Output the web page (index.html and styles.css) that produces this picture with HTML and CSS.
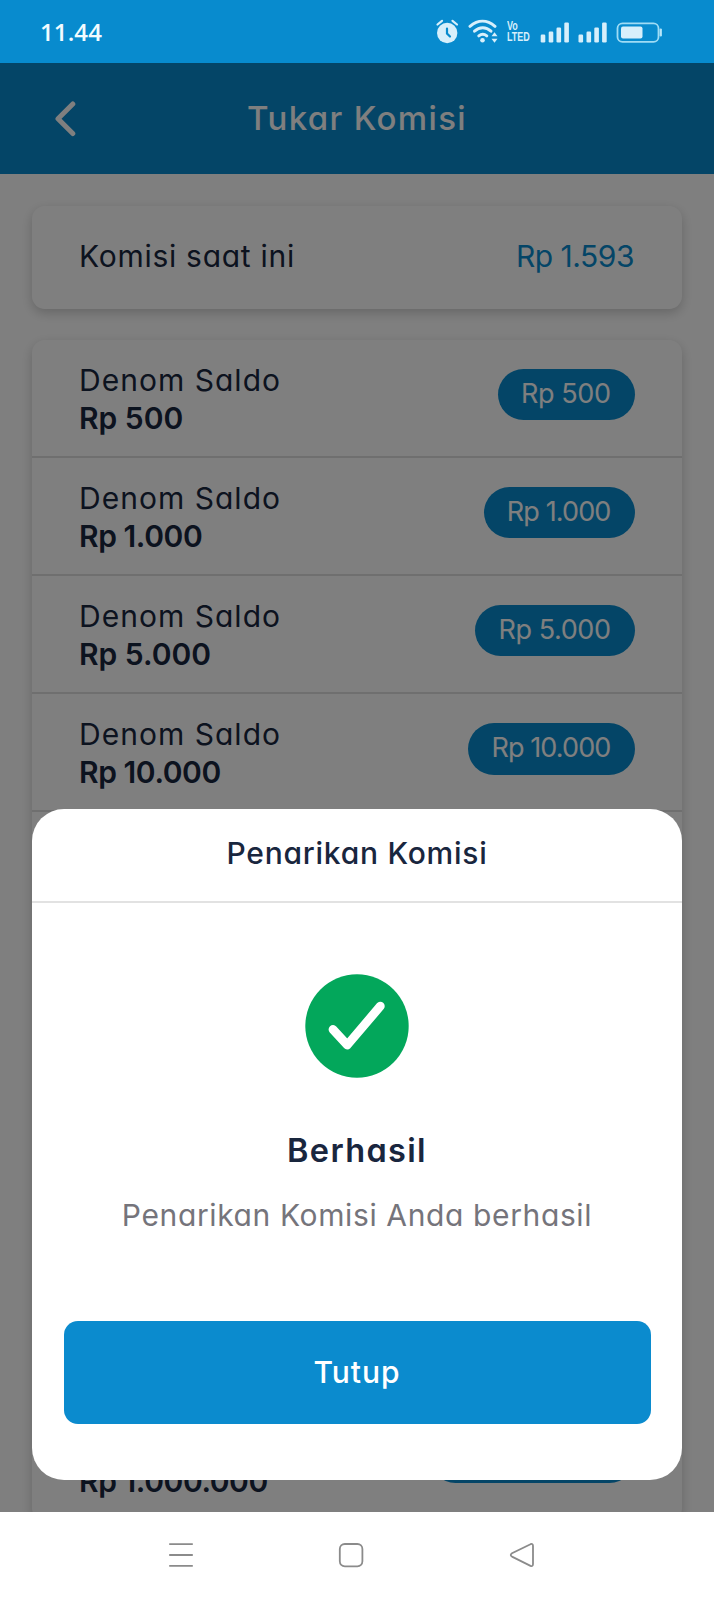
FILE: index.html
```
<!DOCTYPE html>
<html lang="id">
<head>
<meta charset="utf-8">
<meta name="viewport" content="width=device-width, initial-scale=1">
<title>Tukar Komisi</title>
<link rel="stylesheet" href="styles.css">
</head>
<body>
<div class="phone">
  <div class="status">
    <span class="clock">11.44</span>
    <svg class="status-icons" viewBox="0 0 230 26" width="230" height="26" fill="#d7effb" stroke="none">
      <!-- alarm -->
      <circle cx="12.200" cy="15" r="10.200"/>
      <path d="M2.500 6.500 7 2.800M22 6.500 17.500 2.800" stroke="#d7effb" stroke-width="2.200" stroke-linecap="round"/>
      <path d="M12 10.500v5l3 3" fill="none" stroke="#088bce" stroke-width="2.200" stroke-linecap="round"/>
      <!-- wifi -->
      <g fill="none" stroke="#d7effb" stroke-width="3" stroke-linecap="round">
        <path d="M35 8.300C43 1.500 52 1.500 60 8.300"/>
        <path d="M39.500 13.200C44.500 8.600 51 8.600 56 13.200"/>
        <path d="M43.800 17.800C46.300 15.800 49.300 15.800 51.800 17.800"/>
      </g>
      <circle cx="47.500" cy="22.300" r="2.300"/>
      <path d="M56.500 18.300 59.500 14.300 62.500 18.300ZM56.500 20.800 59.500 24.800 62.500 20.800Z"/>
      <!-- signal bars -->
      <g id="bars">
        <rect x="105.700" y="16.500" width="4.600" height="8" rx="1.200"/>
        <rect x="113.700" y="13.500" width="4.600" height="11" rx="1.200"/>
        <rect x="121.500" y="9.500" width="4.600" height="15" rx="1.200"/>
        <rect x="129.300" y="4.500" width="4.600" height="20" rx="1.200"/>
      </g>
      <use href="#bars" x="37.800"/>
      <!-- battery -->
      <rect x="182.500" y="5.300" width="41" height="18.600" rx="5" fill="none" stroke="#9fdcf5" stroke-width="1.800"/>
      <rect x="186" y="8.600" width="21.500" height="12" rx="2"/>
      <path d="M225 11h1.500v7h-1.500z" stroke="#9fdcf5" stroke-width="1"/>
    </svg>
    <span class="volte"><span>Vo</span><span>LTED</span></span>
  </div>

  <div class="app">
    <header class="topbar">
      <svg class="back" viewBox="0 0 22 36" width="22" height="36"><path d="M17.800 3 3 17.700 17.800 32.500" fill="none" stroke="#fff" stroke-width="5" stroke-linecap="round" stroke-linejoin="round"/></svg>
      <h1>Tukar Komisi</h1>
    </header>
    <main class="content">
      <section class="card balance">
        <span class="label">Komisi saat ini</span>
        <span class="amount">Rp 1.593</span>
      </section>
      <section class="card list">
        <div class="row"><div class="denom"><span class="name">Denom Saldo</span><b>Rp 500</b></div><span class="pill">Rp 500</span></div>
        <div class="row"><div class="denom"><span class="name">Denom Saldo</span><b class="one">Rp 1.000</b></div><span class="pill one">Rp 1.000</span></div>
        <div class="row"><div class="denom"><span class="name">Denom Saldo</span><b>Rp 5.000</b></div><span class="pill">Rp 5.000</span></div>
        <div class="row"><div class="denom"><span class="name">Denom Saldo</span><b class="one">Rp 10.000</b></div><span class="pill one">Rp 10.000</span></div>
        <div class="row"></div>
        <div class="row"></div>
        <div class="row"></div>
        <div class="row"></div>
        <div class="row"></div>
        <div class="row"><div class="denom"><span class="name">Denom Saldo</span><b class="one">Rp 1.000.000</b></div><span class="pill one">Rp 1.000.000</span></div>
      </section>
    </main>
    <div class="overlay">
      <div class="sheet">
        <div class="sheet-head">Penarikan Komisi</div>
        <div class="sheet-body">
          <svg class="check" viewBox="0 0 104 104" width="104" height="104"><circle cx="52" cy="52" r="51.700" fill="#03a75b"/><path d="M28 55.500 42.300 71 75.300 32.200" fill="none" stroke="#fff" stroke-width="8.800" stroke-linecap="round" stroke-linejoin="round"/></svg>
          <h2>Berhasil</h2>
          <p>Penarikan Komisi Anda berhasil</p>
          <button type="button">Tutup</button>
        </div>
      </div>
    </div>
  </div>

  <nav class="navbar">
    <svg viewBox="0 0 26 26" width="26" height="26"><path d="M1.200 2.200h23.600M1.200 13h23.600M1.200 23.800h23.600"/></svg>
    <svg viewBox="0 0 26 26" width="26" height="26"><rect x="1.800" y="2" width="22.600" height="22.300" rx="5"/></svg>
    <svg viewBox="0 0 26 26" width="26" height="26"><path d="M21.500 2.200 3 11.300Q.500 13 3 14.600L21.500 23.900Q24 24.800 24 22V4Q24 1.200 21.500 2.200Z"/></svg>
  </nav>
</div>
</body>
</html>
```
FILE: styles.css
```
* { box-sizing: border-box; }
body { margin: 0; font-family: Inter, "Open Sans", sans-serif; font-feature-settings: "cv11"; color: #19263e; }
h1, h2, p { margin: 0; }

.phone { width: 714px; height: 1599px; display: flex; flex-direction: column; overflow: hidden; background: #fff; }

.status { position: relative; height: 63px; flex: none; display: flex; align-items: center; justify-content: space-between; padding: 0 49px 2px 40px; background: #088bce; }
.clock { padding-top: 1px; color: #f2fbff; font: 600 24px "Open Sans", sans-serif; letter-spacing: .1px; }
.volte { position: absolute; left: 507px; top: 21px; display: flex; flex-direction: column; color: #d7effb; font: 700 12.500px/11px "Liberation Sans", sans-serif; transform: scaleX(.72); transform-origin: left; }

.app { position: relative; flex: 1; min-height: 0; overflow: hidden; background: #fff; }
.topbar { display: grid; grid-template-columns: 1fr auto 1fr; align-items: center; height: 111px; padding-left: 55px; background: #088bce; color: #fff; }
.topbar h1 { margin: 0 0 1px -55px; font-size: 33px; font-weight: 500; line-height: 40px; letter-spacing: 1.36px; }
.topbar::after { content: ""; }

.content { display: flex; flex-direction: column; gap: 31px; padding: 32px; }
.card { border-radius: 13px; background: #fff; box-shadow: 0 4px 12px rgba(0, 0, 0, .2); }
.balance { display: flex; justify-content: space-between; align-items: center; height: 103px; padding: 0 48px 4px 47px; font-size: 30px; line-height: 38px; }
.label { letter-spacing: .72px; }
.amount { color: #088bce; letter-spacing: -.48px; }

.row { display: flex; align-items: center; justify-content: space-between; height: 118.100px; padding: 0 47.500px 0 47px; border-bottom: 2px solid #dedede; }
.row:last-child { border-bottom-color: transparent; }
.denom { display: flex; flex-direction: column; padding-top: 2px; font-size: 30px; line-height: 38px; }
.name { letter-spacing: 1.02px; }
.denom b { font-weight: 600; }
.denom b.one { letter-spacing: -.42px; }
.pill { display: block; margin-top: -7px; height: 51.500px; padding: 0 24px 0 23px; border-radius: 26px; background: #088bce; color: #fff; font-size: 27px; line-height: 49px; letter-spacing: -.42px; }
.pill.one { letter-spacing: -.88px; }

.overlay { position: absolute; inset: 0; display: flex; align-items: flex-end; padding: 0 32px 32px; background: rgba(0, 0, 0, .5); }
.sheet { width: 650px; height: 671.500px; display: flex; flex-direction: column; border-radius: 32px; background: #fff; }
.sheet-head { height: 94px; border-bottom: 2px solid #e2e2e2; text-align: center; font-size: 30px; font-weight: 500; line-height: 88px; letter-spacing: .75px; }
.sheet-body { flex: 1; display: flex; flex-direction: column; align-items: center; padding: 71px 31px 0; }
.sheet-body h2 { margin-top: 53px; font-size: 32.500px; font-weight: 600; line-height: 40px; letter-spacing: 1.35px; }
.sheet-body p { margin-top: 25px; font-size: 30px; line-height: 38px; letter-spacing: .62px; color: #75747b; }
.sheet-body button { width: 587px; height: 103px; margin-top: 87.500px; padding-bottom: 2px; border: 0; border-radius: 14px; background: #0b8bce; color: #fff; font: 500 30px/38px Inter, sans-serif; letter-spacing: .95px; }

.navbar { flex: none; display: flex; justify-content: center; align-items: center; gap: 144.500px; height: 87px; padding: 0 12px 1px 0; background: #fff; }
.navbar svg { fill: none; stroke: #8b8b8b; stroke-width: 1.800; }
```
